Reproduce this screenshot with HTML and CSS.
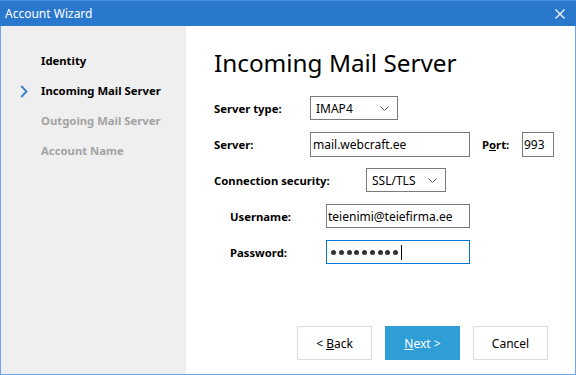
FILE: index.html
```html
<!DOCTYPE html>
<html lang="en">
<head>
<meta charset="utf-8">
<title>Account Wizard</title>
<link rel="stylesheet" href="styles.css">
</head>
<body>
<div class="window">
  <header class="titlebar">
    <span class="title">Account Wizard</span>
    <svg class="close" width="10" height="10" viewBox="0 0 10 10"><path d="M0.5 0.5L9.5 9.5M9.5 0.5L0.5 9.5" stroke="#fff" stroke-width="1.2" fill="none"/></svg>
  </header>
  <div class="content">
    <nav class="sidebar">
      <ul class="steps">
        <li class="step done">Identity</li>
        <li class="step current"><svg class="chev" width="8" height="13" viewBox="0 0 8 13"><path d="M1.2 1L6.5 6.5L1.2 12" stroke="#3b86cf" stroke-width="2" fill="none"/></svg>Incoming Mail Server</li>
        <li class="step todo">Outgoing Mail Server</li>
        <li class="step todo">Account Name</li>
      </ul>
    </nav>
    <main class="main">
      <h1 class="heading">Incoming Mail Server</h1>
      <div class="form">
        <div class="row">
          <span class="label w96">Server type:</span>
          <div class="select w88"><span class="val">IMAP4</span><svg class="caret" width="9" height="5" viewBox="0 0 9 5"><path d="M0.5 0.5L4.5 4.5L8.5 0.5" stroke="#555" stroke-width="1" fill="none"/></svg></div>
        </div>
        <div class="row">
          <span class="label w96">Server:</span>
          <div class="field w160 tall">mail.webcraft.ee</div>
          <span class="label port">P<u>o</u>rt:</span>
          <div class="field w32 tall tight">993</div>
        </div>
        <div class="row">
          <span class="label w152">Connection security:</span>
          <div class="select w80"><span class="val">SSL/TLS</span><svg class="caret" width="9" height="5" viewBox="0 0 9 5"><path d="M0.5 0.5L4.5 4.5L8.5 0.5" stroke="#555" stroke-width="1" fill="none"/></svg></div>
        </div>
        <div class="row indent">
          <span class="label w96">Username:</span>
          <div class="field w144 tight">teienimi@teiefirma.ee</div>
        </div>
        <div class="row indent">
          <span class="label w96">Password:</span>
          <div class="field w144 focus"><span class="dots"><i></i><i></i><i></i><i></i><i></i><i></i><i></i><i></i><i></i></span><span class="cursor"></span></div>
        </div>
      </div>
      <div class="buttons">
        <button class="btn">&lt; <u>B</u>ack</button>
        <button class="btn primary"><u>N</u>ext &gt;</button>
        <button class="btn">Cancel</button>
      </div>
    </main>
  </div>
</div>
</body>
</html>
```
FILE: styles.css
```css
* { box-sizing: border-box; }
html, body { margin: 0; padding: 0; background: #fff; }
body { font-family: "Noto Sans", "Open Sans", sans-serif; font-size: 12px; color: #000; }

.window {
  width: 576px;
  height: 375px;
  border: 1px solid #68a8f2;
  border-top: 0;
  display: flex;
  flex-direction: column;
  background: #fff;
}

.titlebar {
  height: 26px;
  margin: 0 -1px;
  padding: 0 11px 0 5px;
  background: #2a78cd;
  border-top: 1px solid #4a8ddb;
  display: flex;
  align-items: center;
  justify-content: space-between;
  flex: none;
}
.title { color: #fff; font-size: 12px; }
.close { display: block; }

.content { flex: 1; display: flex; min-height: 0; }

.sidebar {
  width: 185px;
  flex: none;
  background: #efefef;
  padding: 20px 0 0 40px;
}
.steps { list-style: none; margin: 0; padding: 0; }
.step { height: 30px; line-height: 30px; font-weight: bold; font-size: 11.3px; position: relative; }
.step.todo { color: #a3a3a3; }
.chev { position: absolute; left: -21px; top: 9px; }

.main {
  flex: 1;
  min-width: 0;
  display: flex;
  flex-direction: column;
  padding: 21px 27px 14px 28px;
}
.heading {
  margin: 0 0 17px;
  font-size: 24.3px;
  line-height: 32px;
  font-weight: normal;
  color: #000;
}

.form { display: flex; flex-direction: column; gap: 12px; }
.row { display: flex; align-items: center; height: 24px; }
.row.indent { padding-left: 16px; }
.label { font-weight: bold; flex: none; font-size: 11.3px; }
.w96 { width: 96px; }
.w152 { width: 152px; }
.port { width: 40px; margin-left: 12px; }

.select, .field {
  height: 24px;
  border: 1px solid #7a7a7a;
  display: flex;
  align-items: center;
  flex: none;
  background: #fff;
}
.select { padding: 0 8px 0 5px; justify-content: space-between; }
.field { padding-left: 2px; }
.field.tight { padding-left: 1px; }
.field.tall { height: 25px; }
.field.focus { border-color: #0078d7; padding-left: 4px; }
.w88 { width: 88px; }
.w80 { width: 80px; }
.w160 { width: 160px; }
.w144 { width: 144px; }
.w32 { width: 32px; }

.dots { display: flex; gap: 2.75px; }
.dots i { display: block; width: 5px; height: 5px; border-radius: 50%; background: #333; }
.cursor { display: block; width: 1px; height: 15px; background: #000; margin-left: 3px; }

.buttons {
  margin-top: auto;
  display: flex;
  justify-content: flex-end;
  gap: 13px;
}
.btn {
  width: 75px;
  height: 34px;
  border: 1px solid #dcdcdc;
  background: #fff;
  font-family: inherit;
  font-size: 12px;
  color: #000;
  padding: 0;
}
.btn.primary { background: #2f9ed7; border-color: #2f9ed7; color: #fff; }
```
